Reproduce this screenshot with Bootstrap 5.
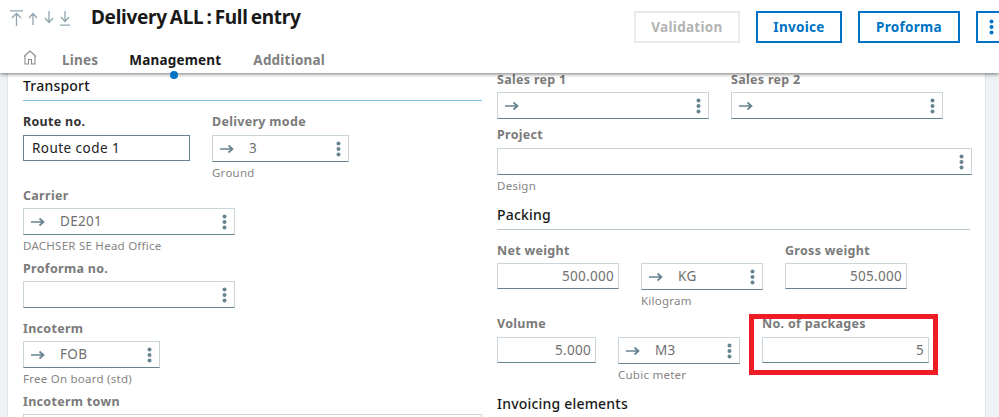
<!DOCTYPE html>
<html lang="en"><head><meta charset="utf-8"><title>Delivery</title>
<link href="https://cdn.jsdelivr.net/npm/bootstrap@5.3.0/dist/css/bootstrap.min.css" rel="stylesheet">
<style>
html,body{height:417px;overflow:hidden;background:#eff3f5;font-family:"Noto Sans",sans-serif}
.page{position:relative;width:999px;height:417px;overflow:hidden}
.top{height:73px;background:#fff;box-shadow:0 1px 4px rgba(0,0,0,.55);position:relative;z-index:2}
.headrow{height:44px;padding-left:10px}
.arrows{width:81px;padding-top:10px;gap:4px;align-self:flex-start}
.arrows svg{display:block}
.ttl{font-size:19px;font-weight:700;letter-spacing:-.3px;word-spacing:-1.500px;color:#191919;margin:0;padding-top:4px;align-self:flex-start;line-height:26px}
.acts{margin-left:auto;gap:16px;margin-right:-11px;padding-top:11px;align-self:flex-start}
.act{height:32px;border:2px solid #0073c6;border-radius:0;background:#fff;color:#0073c6;font-size:13.5px;font-weight:700;padding:0;letter-spacing:.3px;line-height:27px}
.act:disabled{border-color:#e6ebee;color:#b3b3b3;opacity:1;background:#fff}
.w-val{width:106px}.w-inv{width:86px}.w-pro{width:102px}.w-more{width:34px}
.more-ic{margin-left:11px}
.tabs{height:29px;padding-left:23px}
.hm{width:39px;padding-top:6px}
.hm svg{display:block}
.tb{font-size:13.5px;font-weight:700;color:#808080;letter-spacing:.2px;line-height:20px;margin-right:31px;padding-top:6px;position:relative}
.tb.on{color:#191919;letter-spacing:.2px;margin-right:32px}
.tb.on::after{content:"";position:absolute;width:8px;height:8px;border-radius:50%;background:#0073c6;left:41px;top:27px;z-index:3}
.sheet{position:absolute;left:7px;top:0;width:979px;height:417px;background:#fff;border-left:1px solid #e0e5e8;border-right:1px solid #e0e5e8;z-index:1}
.cols{gap:15px;padding-left:15px}
.lcol{width:459px;padding-top:76px}
.rcol{width:475px;padding-top:71px}
.sect{font-size:14px;font-weight:500;color:#191919;line-height:20px;letter-spacing:.2px}
.rule{border-bottom:1px solid #7fbde6;padding-bottom:4px;height:25px}
.rule2{border-bottom:1px solid #b9c8ce;height:25px;padding-bottom:4px;margin-top:5px;width:473px}
.lbl{font-size:12.5px;font-weight:700;color:#7a7a7a;line-height:17px;height:16px;letter-spacing:.3px;margin-bottom:5px;white-space:nowrap}
.lbl.req{color:#333}
.lbl.gap6{margin-bottom:6px}
.fld{height:27px;border:1px solid #c9d5da;border-bottom:1px solid #668390;background:#fff;padding:0 7px;font-size:13.5px;color:#707070;letter-spacing:.3px}
.fld.plain{height:26px;justify-content:flex-end;padding-right:4px}
.fld.act-in{height:26px;border:1px solid #668390;color:#222;padding-left:8px;letter-spacing:.45px}
.arr{width:29px;flex:none}
.dots{margin-left:auto;width:5px;flex:none}
.sub{font-size:11.5px;color:#858585;line-height:14px;letter-spacing:.25px;padding-top:4px;height:25px;white-space:nowrap}
.red{position:absolute;left:749px;top:314px;width:189px;height:61px;border:5px solid #ee1c25;z-index:4}
.g22{gap:22px}
.w99{width:99px}.w122{width:122px}.w137{width:137px}.w167{width:167px}.w212{width:212px}
.mt12{margin-top:12px}
.mt7{margin-top:7px}
.mt5{margin-top:5px}
</style></head><body>
<svg width="0" height="0" class="position-absolute"><defs>
<symbol id="ar" viewBox="0 0 14 10"><path d="M0 5h12M8.5 1.500 12.500 5 8.500 8.500" fill="none" stroke="#668390" stroke-width="1.700"/></symbol>
<symbol id="dt" viewBox="0 0 5 16"><circle cx="2.500" cy="2.500" r="2" fill="#668390"/><circle cx="2.500" cy="8" r="2" fill="#668390"/><circle cx="2.500" cy="13.500" r="2" fill="#668390"/></symbol>
</defs></svg>
<div class="page">
<div class="sheet"><div class="cols d-flex">
<div class="lcol">
 <div class="sect rule">Transport</div>
 <div class="d-flex g22 mt12">
  <div class="w167"><div class="lbl req gap6">Route no.</div><div class="fld act-in d-flex align-items-center">Route code 1</div></div>
  <div class="w137"><div class="lbl gap6">Delivery mode</div><div class="fld d-flex align-items-center"><svg class="arr" height="10" width="14"><use href="#ar" width="14" height="10"/></svg><span>3</span><svg class="dots" width="5" height="16"><use href="#dt"/></svg></div><div class="sub">Ground</div></div>
 </div>
 <div class="w212"><div class="lbl">Carrier</div><div class="fld d-flex align-items-center"><svg class="arr" height="10" width="14"><use href="#ar" width="14" height="10"/></svg><span>DE201</span><svg class="dots" width="5" height="16"><use href="#dt"/></svg></div><div class="sub">DACHSER SE Head Office</div></div>
 <div class="w212"><div class="lbl">Proforma no.</div><div class="fld d-flex align-items-center"><svg class="dots" width="5" height="16"><use href="#dt"/></svg></div></div>
 <div class="w137 mt12"><div class="lbl">Incoterm</div><div class="fld d-flex align-items-center"><svg class="arr" height="10" width="14"><use href="#ar" width="14" height="10"/></svg><span>FOB</span><svg class="dots" width="5" height="16"><use href="#dt"/></svg></div><div class="sub">Free On board (std)</div></div>
 <div><div class="lbl">Incoterm town</div><div class="fld"></div></div>
</div>
<div class="rcol">
 <div class="d-flex g22">
  <div class="w212"><div class="lbl">Sales rep 1</div><div class="fld d-flex align-items-center"><svg class="arr" height="10" width="14"><use href="#ar" width="14" height="10"/></svg><svg class="dots" width="5" height="16"><use href="#dt"/></svg></div></div>
  <div class="w212"><div class="lbl">Sales rep 2</div><div class="fld d-flex align-items-center"><svg class="arr" height="10" width="14"><use href="#ar" width="14" height="10"/></svg><svg class="dots" width="5" height="16"><use href="#dt"/></svg></div></div>
 </div>
 <div class="mt7"><div class="lbl gap6">Project</div><div class="fld d-flex align-items-center"><svg class="dots" width="5" height="16"><use href="#dt"/></svg></div><div class="sub">Design</div></div>
 <div class="sect rule2">Packing</div>
 <div class="d-flex g22 mt12">
  <div class="w122"><div class="lbl">Net weight</div><div class="fld plain d-flex align-items-center">500.000</div></div>
  <div class="w122"><div class="lbl">&nbsp;</div><div class="fld d-flex align-items-center"><svg class="arr" height="10" width="14"><use href="#ar" width="14" height="10"/></svg><span>KG</span><svg class="dots" width="5" height="16"><use href="#dt"/></svg></div><div class="sub">Kilogram</div></div>
  <div class="w122"><div class="lbl">Gross weight</div><div class="fld plain d-flex align-items-center">505.000</div></div>
 </div>
 <div class="d-flex g22">
  <div class="w99"><div class="lbl gap6">Volume</div><div class="fld plain d-flex align-items-center">5.000</div></div>
  <div class="w122"><div class="lbl gap6">&nbsp;</div><div class="fld d-flex align-items-center"><svg class="arr" height="10" width="14"><use href="#ar" width="14" height="10"/></svg><span>M3</span><svg class="dots" width="5" height="16"><use href="#dt"/></svg></div><div class="sub">Cubic meter</div></div>
  <div class="w167"><div class="lbl gap6">No. of packages</div><div class="fld plain d-flex align-items-center">5</div></div>
 </div>
 <div class="sect mt5">Invoicing elements</div>
</div>
</div></div>
<div class="top">
 <div class="headrow d-flex">
  <div class="arrows d-flex">
   <svg width="13" height="16" viewBox="0 0 13 16"><path d="M0 .8h13M6.500 16V3.500M2 8l4.500-4.500L11 8" fill="none" stroke="#8fa6b0" stroke-width="1.300"/></svg>
   <svg width="12" height="16" viewBox="0 0 12 16"><path d="M6 15V3.500M2 8l4-4.500L10 8" fill="none" stroke="#8fa6b0" stroke-width="1.300"/></svg>
   <svg width="12" height="16" viewBox="0 0 12 16"><path d="M6 1v11.500M2 8l4 4.500L10 8" fill="none" stroke="#8fa6b0" stroke-width="1.300"/></svg>
   <svg width="12" height="16" viewBox="0 0 12 16"><path d="M6 1v10.500M2 7l4 4.500L10 7M1 15.200h10" fill="none" stroke="#8fa6b0" stroke-width="1.300"/></svg>
  </div>
  <h1 class="ttl">Delivery ALL : Full entry</h1>
  <div class="acts d-flex">
   <button class="btn act w-val" disabled>Validation</button>
   <button class="btn act w-inv">Invoice</button>
   <button class="btn act w-pro">Proforma</button>
   <button class="btn act w-more" aria-label="More"><svg width="5" height="16" viewBox="0 0 5 16" class="d-block more-ic"><circle cx="2.500" cy="2.500" r="2" fill="#0073c6"/><circle cx="2.500" cy="8" r="2" fill="#0073c6"/><circle cx="2.500" cy="13.500" r="2" fill="#0073c6"/></svg></button>
  </div>
 </div>
 <div class="tabs d-flex">
  <div class="hm"><svg width="14" height="15" viewBox="0 0 14 15"><path d="M1 6.500 7 1l6 5.500M2 5.500V14h3.500V9.500h3V14H12V5.500" fill="none" stroke="#8a8a8a" stroke-width="1.100"/></svg></div>
  <div class="tb">Lines</div>
  <div class="tb on">Management</div>
  <div class="tb">Additional</div>
 </div>
</div>
<div class="red"></div>
</div>
<script src="https://cdn.jsdelivr.net/npm/bootstrap@5.3.0/dist/js/bootstrap.bundle.min.js"></script>
</body></html>
